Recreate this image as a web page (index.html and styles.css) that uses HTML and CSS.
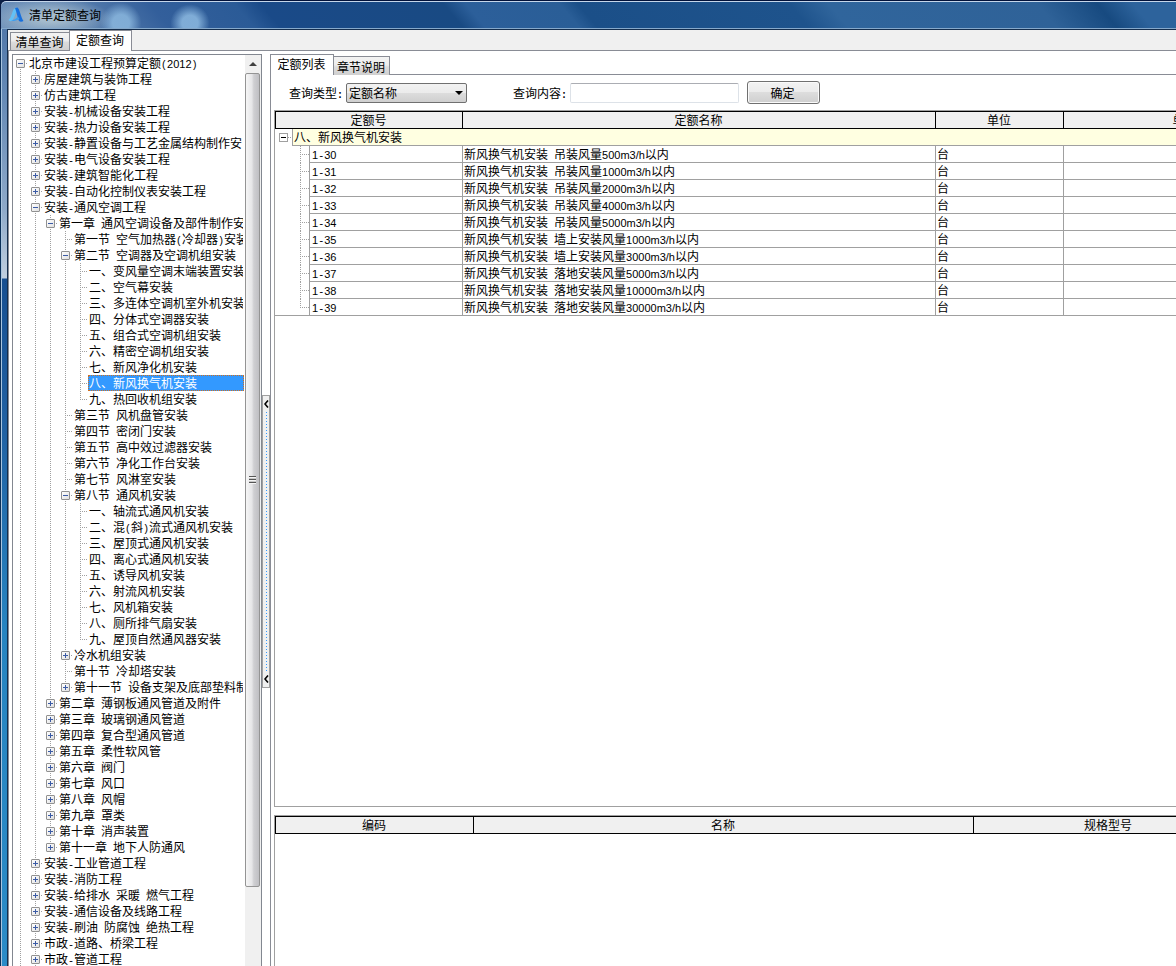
FILE: index.html
```html
<!DOCTYPE html>
<html lang="zh-CN">
<head>
<meta charset="utf-8">
<title>清单定额查询</title>
<link rel="stylesheet" href="styles.css">
</head>
<body>
<div class="window">
<header class="titlebar">
<svg class="logo" viewBox="0 0 16 16" aria-hidden="true">
<path d="M0.500 13C3 11 4 6 5.500 2.500L8 .5l1.500 1.200C8.500 4 7 9 4.500 13.500c-1.500 1-3 .8-4-.5z" fill="#62c0f6"/>
<path d="M7 1L9.500.5c2.500 2 3 9 6 13.500-1.500 1-3.500 1-4.500 0C9.500 11 9 6 7 1z" fill="#176fdc"/>
<path d="M3 13.500c3-.5 5-1.500 7-4l1.500 2.500C9 13.500 6 14.500 3 13.500z" fill="#3c9df0"/>
</svg>
<h1 class="title">清单定额查询</h1>
</header>
<div class="frame">
<main class="client">
<nav class="tabs main-tabs"><button class="tab">清单查询</button><button class="tab active">定额查询</button></nav>
<div class="panes">
<aside class="tree-pane">
<div class="tree-view">
<ul class="tree">
<li class="root"><div class="row"><button class="toggle open" aria-label="折叠"></button><span class="label">北京市建设工程预算定额<span class="n">(</span><span class="d">2012</span><span class="n">)</span></span></div>
<ul>
<li><div class="row"><button class="toggle" aria-label="展开"></button><span class="label">房屋建筑与装饰工程</span></div></li>
<li><div class="row"><button class="toggle" aria-label="展开"></button><span class="label">仿古建筑工程</span></div></li>
<li><div class="row"><button class="toggle" aria-label="展开"></button><span class="label">安装<span class="n">-</span>机械设备安装工程</span></div></li>
<li><div class="row"><button class="toggle" aria-label="展开"></button><span class="label">安装<span class="n">-</span>热力设备安装工程</span></div></li>
<li><div class="row"><button class="toggle" aria-label="展开"></button><span class="label">安装<span class="n">-</span>静置设备与工艺金属结构制作安</span></div></li>
<li><div class="row"><button class="toggle" aria-label="展开"></button><span class="label">安装<span class="n">-</span>电气设备安装工程</span></div></li>
<li><div class="row"><button class="toggle" aria-label="展开"></button><span class="label">安装<span class="n">-</span>建筑智能化工程</span></div></li>
<li><div class="row"><button class="toggle" aria-label="展开"></button><span class="label">安装<span class="n">-</span>自动化控制仪表安装工程</span></div></li>
<li><div class="row"><button class="toggle open" aria-label="折叠"></button><span class="label">安装<span class="n">-</span>通风空调工程</span></div>
<ul>
<li><div class="row"><button class="toggle open" aria-label="折叠"></button><span class="label">第一章<span class="n"> </span>通风空调设备及部件制作安</span></div>
<ul>
<li><div class="row leaf"><span class="label">第一节<span class="n"> </span>空气加热器<span class="n">(</span>冷却器<span class="n">)</span>安装</span></div></li>
<li><div class="row"><button class="toggle open" aria-label="折叠"></button><span class="label">第二节<span class="n"> </span>空调器及空调机组安装</span></div>
<ul>
<li><div class="row leaf"><span class="label">一、变风量空调末端装置安装</span></div></li>
<li><div class="row leaf"><span class="label">二、空气幕安装</span></div></li>
<li><div class="row leaf"><span class="label">三、多连体空调机室外机安装</span></div></li>
<li><div class="row leaf"><span class="label">四、分体式空调器安装</span></div></li>
<li><div class="row leaf"><span class="label">五、组合式空调机组安装</span></div></li>
<li><div class="row leaf"><span class="label">六、精密空调机组安装</span></div></li>
<li><div class="row leaf"><span class="label">七、新风净化机安装</span></div></li>
<li><div class="row leaf"><span class="label selected">八、新风换气机安装</span></div></li>
<li><div class="row leaf"><span class="label">九、热回收机组安装</span></div></li>
</ul></li>
<li><div class="row leaf"><span class="label">第三节<span class="n"> </span>风机盘管安装</span></div></li>
<li><div class="row leaf"><span class="label">第四节<span class="n"> </span>密闭门安装</span></div></li>
<li><div class="row leaf"><span class="label">第五节<span class="n"> </span>高中效过滤器安装</span></div></li>
<li><div class="row leaf"><span class="label">第六节<span class="n"> </span>净化工作台安装</span></div></li>
<li><div class="row leaf"><span class="label">第七节<span class="n"> </span>风淋室安装</span></div></li>
<li><div class="row"><button class="toggle open" aria-label="折叠"></button><span class="label">第八节<span class="n"> </span>通风机安装</span></div>
<ul>
<li><div class="row leaf"><span class="label">一、轴流式通风机安装</span></div></li>
<li><div class="row leaf"><span class="label">二、混<span class="n">(</span>斜<span class="n">)</span>流式通风机安装</span></div></li>
<li><div class="row leaf"><span class="label">三、屋顶式通风机安装</span></div></li>
<li><div class="row leaf"><span class="label">四、离心式通风机安装</span></div></li>
<li><div class="row leaf"><span class="label">五、诱导风机安装</span></div></li>
<li><div class="row leaf"><span class="label">六、射流风机安装</span></div></li>
<li><div class="row leaf"><span class="label">七、风机箱安装</span></div></li>
<li><div class="row leaf"><span class="label">八、厕所排气扇安装</span></div></li>
<li><div class="row leaf"><span class="label">九、屋顶自然通风器安装</span></div></li>
</ul></li>
<li><div class="row"><button class="toggle" aria-label="展开"></button><span class="label">冷水机组安装</span></div></li>
<li><div class="row leaf"><span class="label">第十节<span class="n"> </span>冷却塔安装</span></div></li>
<li><div class="row"><button class="toggle" aria-label="展开"></button><span class="label">第十一节<span class="n"> </span>设备支架及底部垫料制</span></div></li>
</ul></li>
<li><div class="row"><button class="toggle" aria-label="展开"></button><span class="label">第二章<span class="n"> </span>薄钢板通风管道及附件</span></div></li>
<li><div class="row"><button class="toggle" aria-label="展开"></button><span class="label">第三章<span class="n"> </span>玻璃钢通风管道</span></div></li>
<li><div class="row"><button class="toggle" aria-label="展开"></button><span class="label">第四章<span class="n"> </span>复合型通风管道</span></div></li>
<li><div class="row"><button class="toggle" aria-label="展开"></button><span class="label">第五章<span class="n"> </span>柔性软风管</span></div></li>
<li><div class="row"><button class="toggle" aria-label="展开"></button><span class="label">第六章<span class="n"> </span>阀门</span></div></li>
<li><div class="row"><button class="toggle" aria-label="展开"></button><span class="label">第七章<span class="n"> </span>风口</span></div></li>
<li><div class="row"><button class="toggle" aria-label="展开"></button><span class="label">第八章<span class="n"> </span>风帽</span></div></li>
<li><div class="row"><button class="toggle" aria-label="展开"></button><span class="label">第九章<span class="n"> </span>罩类</span></div></li>
<li><div class="row"><button class="toggle" aria-label="展开"></button><span class="label">第十章<span class="n"> </span>消声装置</span></div></li>
<li><div class="row"><button class="toggle" aria-label="展开"></button><span class="label">第十一章<span class="n"> </span>地下人防通风</span></div></li>
</ul></li>
<li><div class="row"><button class="toggle" aria-label="展开"></button><span class="label">安装<span class="n">-</span>工业管道工程</span></div></li>
<li><div class="row"><button class="toggle" aria-label="展开"></button><span class="label">安装<span class="n">-</span>消防工程</span></div></li>
<li><div class="row"><button class="toggle" aria-label="展开"></button><span class="label">安装<span class="n">-</span>给排水<span class="n"> </span>采暖<span class="n"> </span>燃气工程</span></div></li>
<li><div class="row"><button class="toggle" aria-label="展开"></button><span class="label">安装<span class="n">-</span>通信设备及线路工程</span></div></li>
<li><div class="row"><button class="toggle" aria-label="展开"></button><span class="label">安装<span class="n">-</span>刷油<span class="n"> </span>防腐蚀<span class="n"> </span>绝热工程</span></div></li>
<li><div class="row"><button class="toggle" aria-label="展开"></button><span class="label">市政<span class="n">-</span>道路、桥梁工程</span></div></li>
<li class="more"><div class="row"><button class="toggle" aria-label="展开"></button><span class="label">市政<span class="n">-</span>管道工程</span></div></li>
</ul></li>
</ul>
</div>
<div class="scrollbar">
<button class="scroll-up" aria-label="向上滚动"></button>
<div class="thumb"><span class="grip"></span></div>
<div class="track"></div>
</div>
</aside>
<div class="splitter">
<button class="split-handle" aria-label="折叠面板">
<svg width="5" height="8" viewBox="0 0 5 8"><path d="M4 0.500L1 4l3 3.500" fill="none" stroke="#000" stroke-width="1.600"/></svg>
<span class="dots"></span>
<svg width="5" height="8" viewBox="0 0 5 8"><path d="M4 0.500L1 4l3 3.500" fill="none" stroke="#000" stroke-width="1.600"/></svg>
</button>
</div>
<section class="detail">
<nav class="tabs sub-tabs"><button class="tab active">定额列表</button><button class="tab">章节说明</button></nav>
<div class="detail-body">
<form class="query">
<label for="kind">查询类型<span class="n b">:</span></label>
<span class="select-wrap"><select id="kind"><option>定额名称</option></select></span>
<label for="text" class="second">查询内容<span class="n b">:</span></label>
<input id="text" type="text">
<button type="button" class="ok">确定</button>
</form>
<div class="grid upper">
<table>
<colgroup><col class="c1"><col class="c2"><col class="c3"><col class="c4"></colgroup>
<thead><tr><th>定额号</th><th>定额名称</th><th>单位</th><th>单价</th></tr></thead>
<tbody>
<tr class="group"><td colspan="4"><div class="cell"><span class="gutter"><button class="toggle flat" aria-label="折叠"></button></span><span class="val">八、新风换气机安装</span></div></td></tr>
<tr><td><div class="cell"><span class="gutter"></span><span class="val"><span class="d">1</span><span class="n">-</span><span class="d">30</span></span></div></td><td>新风换气机安装<span class="n"> </span>吊装风量<span class="d">500m3/h</span>以内</td><td>台</td><td></td></tr>
<tr><td><div class="cell"><span class="gutter"></span><span class="val"><span class="d">1</span><span class="n">-</span><span class="d">31</span></span></div></td><td>新风换气机安装<span class="n"> </span>吊装风量<span class="d">1000m3/h</span>以内</td><td>台</td><td></td></tr>
<tr><td><div class="cell"><span class="gutter"></span><span class="val"><span class="d">1</span><span class="n">-</span><span class="d">32</span></span></div></td><td>新风换气机安装<span class="n"> </span>吊装风量<span class="d">2000m3/h</span>以内</td><td>台</td><td></td></tr>
<tr><td><div class="cell"><span class="gutter"></span><span class="val"><span class="d">1</span><span class="n">-</span><span class="d">33</span></span></div></td><td>新风换气机安装<span class="n"> </span>吊装风量<span class="d">4000m3/h</span>以内</td><td>台</td><td></td></tr>
<tr><td><div class="cell"><span class="gutter"></span><span class="val"><span class="d">1</span><span class="n">-</span><span class="d">34</span></span></div></td><td>新风换气机安装<span class="n"> </span>吊装风量<span class="d">5000m3/h</span>以内</td><td>台</td><td></td></tr>
<tr><td><div class="cell"><span class="gutter"></span><span class="val"><span class="d">1</span><span class="n">-</span><span class="d">35</span></span></div></td><td>新风换气机安装<span class="n"> </span>墙上安装风量<span class="d">1000m3/h</span>以内</td><td>台</td><td></td></tr>
<tr><td><div class="cell"><span class="gutter"></span><span class="val"><span class="d">1</span><span class="n">-</span><span class="d">36</span></span></div></td><td>新风换气机安装<span class="n"> </span>墙上安装风量<span class="d">3000m3/h</span>以内</td><td>台</td><td></td></tr>
<tr><td><div class="cell"><span class="gutter"></span><span class="val"><span class="d">1</span><span class="n">-</span><span class="d">37</span></span></div></td><td>新风换气机安装<span class="n"> </span>落地安装风量<span class="d">5000m3/h</span>以内</td><td>台</td><td></td></tr>
<tr><td><div class="cell"><span class="gutter"></span><span class="val"><span class="d">1</span><span class="n">-</span><span class="d">38</span></span></div></td><td>新风换气机安装<span class="n"> </span>落地安装风量<span class="d">10000m3/h</span>以内</td><td>台</td><td></td></tr>
<tr class="last"><td><div class="cell"><span class="gutter"></span><span class="val"><span class="d">1</span><span class="n">-</span><span class="d">39</span></span></div></td><td>新风换气机安装<span class="n"> </span>落地安装风量<span class="d">30000m3/h</span>以内</td><td>台</td><td></td></tr>
</tbody>
</table>
</div>
<div class="grid lower">
<table>
<colgroup><col class="d1"><col class="d2"><col class="d3"></colgroup>
<thead><tr><th>编码</th><th>名称</th><th>规格型号</th></tr></thead>
</table>
</div>
</div>
</section>
</div>
</main>
</div>
</div>
</body>
</html>
```
FILE: styles.css
```css
* { box-sizing: border-box; }
body {
  margin: 0;
  overflow: hidden;
  font: 12px/16px "Noto Sans CJK SC", sans-serif;
  color: #000;
  background: #fff;
}
button, input, select { font: inherit; color: inherit; margin: 0; padding: 0; border-radius: 0; }
ul { list-style: none; margin: 0; padding: 0; }

/* half-width punctuation: exactly half of the 12px ideograph */
.n { font-family: "Liberation Mono", monospace; font-size: 10px; line-height: 0; white-space: pre; }
/* digits and units, about half an ideograph each */
.d { font-family: "Liberation Sans", sans-serif; font-size: 11px; line-height: 0; }
.b { font-weight: bold; }

.window { height: 100vh; display: flex; flex-direction: column; background: #0b1f45; }
.titlebar {
  flex: none;
  height: 29px;
  display: flex;
  align-items: center;
  gap: 5px;
  padding: 0 7px;
  border-top: 1px solid #02123a;
  border-left: 1px solid #0b1f45;
  border-top-left-radius: 6px;
  box-shadow: inset 0 1px #c5d6ea, inset 0 -1px #86a9cb;
  background:
    radial-gradient(ellipse 60px 20px at 50px 17px, #b4c8d2cc 20%, #9db8d500),
    radial-gradient(ellipse 24px 24px at 120px 22px, #8fbce2cc 35%, #7fb0dc00 85%),
    radial-gradient(ellipse 23px 22px at 189px 22px, #93c0e6cc 35%, #7fb0dc00 85%),
    linear-gradient(50deg, #6f92bb 0, #6085b2 60px, #335f9b 130px, #2b5b97 195px, #1a4a88 215px, #194a83 355px, #2c5f9a 372px, #2a5e97 444px, #1b4f88 458px, #1e538c 620px, #30659c 650px, #2f6298 810px, #174a80 856px, #2d639c 883px);
}
.logo { width: 16px; height: 16px; }
.title { margin: 0; font-size: 12px; font-weight: normal; }

.frame {
  flex: 1;
  min-height: 0;
  display: flex;
  padding-left: 7px;
  box-shadow: inset 1px 0 #0b2f58, inset 2px 0 #a9c4de;
  background: linear-gradient(#5279aa 0, #6388b5 60px, #8ea9c9 180px, #c1cfdf 249px, #174f91 250px, #2161a3 400px, #2784c1 600px, #2b8bc7 100%);
}
.client {
  flex: 1;
  min-width: 0;
  display: flex;
  flex-direction: column;
  border-left: 1px solid #152e4d;
  border-top: 1px solid #152e4d;
  background: #f0f0f0;
}

.tabs { flex: none; display: flex; align-items: flex-end; }
.tab {
  height: 19px;
  padding-right: 1px;
  border: 1px solid #898c95;
  border-bottom: 0;
  line-height: 17px;
  background: linear-gradient(#f3f3f3, #ececec 45%, #dcdcdc 55%, #d0d0d0);
}
.tab.active { background: #fff; }
.main-tabs { height: 21px; padding-left: 2px; box-shadow: inset 0 -1px #898c95; }
.main-tabs .tab { width: 59px; border-bottom: 1px solid #898c95; border-right: 0; }
.main-tabs .tab.active { width: 63px; height: 21px; border-right: 1px solid #898c95; border-bottom: 0; line-height: 18px; padding-bottom: 2px; }

.panes {
  flex: 1;
  min-height: 0;
  display: flex;
  border-left: 1px solid #898c95;
  padding: 3px 0 0 3px;
  background: #fff;
}

.tree-pane { flex: none; width: 250px; display: flex; border: 1px solid #828790; border-bottom: 0; }
.tree-view { flex: 1; min-width: 0; overflow: hidden; padding-left: 3px; }
.tree li {
  background: repeating-linear-gradient(#a0a0a0 0 1px, transparent 1px 2px) 4px 0 / 1px 100% no-repeat;
}
.tree .root { background-position: 4px 8px; }
.tree ul { margin-left: 15px; }
.tree ul li:last-child:not(.more) { background-size: 1px 8px; }
.row {
  height: 16px;
  display: flex;
  align-items: center;
  margin-right: 1px;
  background: repeating-linear-gradient(90deg, #a0a0a0 0 1px, transparent 1px 2px) 4px 8px / 8px 1px no-repeat;
}
.row.leaf { padding-left: 9px; }
.label { flex: 1; min-width: 0; height: 16px; overflow: hidden; white-space: nowrap; margin-left: 3px; padding-left: 1px; margin-right: 1px; line-height: 16px; }
.label.selected { margin-right: 0; color: #fff; background: #3399ff; outline: 1px dotted #d07020; outline-offset: -1px; }

.toggle {
  flex: none;
  width: 9px;
  height: 9px;
  border: 1px solid #919191;
  border-radius: 1px;
  background:
    linear-gradient(#3b5ba5, #3b5ba5) center / 5px 1px no-repeat,
    linear-gradient(#3b5ba5, #3b5ba5) center / 1px 5px no-repeat,
    linear-gradient(135deg, #fff, #e0e0e0);
}
.toggle.open { background: linear-gradient(#3b5ba5, #3b5ba5) center / 5px 1px no-repeat, linear-gradient(135deg, #fff, #e0e0e0); }
.toggle.flat { border-color: #a0a0a0; border-radius: 0; background: linear-gradient(#000, #000) center / 5px 1px no-repeat #fff; }

.scrollbar { flex: none; width: 16px; display: flex; flex-direction: column; background: #f0f0f0; }
.scroll-up { flex: none; height: 18px; border: 0; background: #f0f0f0; display: flex; align-items: center; justify-content: center; }
.scroll-up::before { content: ""; border: 4px solid transparent; border-top: 0; border-bottom-color: #404040; }
.thumb {
  flex: 814;
  display: flex;
  align-items: center;
  justify-content: center;
  margin-right: 1px;
  border: 1px solid #949494;
  border-radius: 2px;
  background: linear-gradient(90deg, #f6f6f6, #e6e6e8 45%, #cfcfd2 60%, #bfbfc3);
}
.track { flex: 79; }
.grip { width: 7px; height: 8px; background: repeating-linear-gradient(#555 0 1px, #f5f5f5 1px 2px, #c8c8c8 2px 3px); }

.splitter { flex: none; width: 8px; display: flex; flex-direction: column; }
.splitter::before { content: ""; flex: 341; }
.splitter::after { content: ""; flex: 278; }
.split-handle {
  flex: 283;
  display: flex;
  flex-direction: column;
  align-items: center;
  justify-content: space-between;
  gap: 4px;
  padding: 4px 0;
  border: 1px solid #a0a0a0;
  background: #f0f0f0;
}
.dots { flex: 1; width: 1px; background: repeating-linear-gradient(#3399ff 0 1px, transparent 1px 3px); }

.detail { flex: 1; min-width: 0; display: flex; flex-direction: column; }
.sub-tabs { height: 21px; box-shadow: inset 0 -1px #898c95; }
.sub-tabs .tab { width: 56px; border-left: 0; }
.sub-tabs .tab.active { width: 64px; height: 21px; border-left: 1px solid #898c95; line-height: 18px; padding-bottom: 2px; }
.detail-body { flex: 1; min-height: 0; display: flex; flex-direction: column; border-left: 1px solid #898c95; padding-left: 3px; }

.query { flex: none; height: 35px; display: flex; align-items: center; padding-left: 15px; }
.query label { flex: none; width: 57px; }
.query .second { margin-left: 46px; }
.select-wrap { position: relative; width: 121px; height: 20px; }
.select-wrap::after {
  content: "";
  position: absolute;
  right: 4px;
  top: 8px;
  border: 4px solid transparent;
  border-top-color: #000;
  border-bottom: 0;
  pointer-events: none;
}
select {
  appearance: none;
  display: block;
  width: 100%;
  height: 100%;
  padding-left: 2px;
  border: 1px solid #707070;
  border-radius: 2px;
  background: linear-gradient(#f2f2f2, #ebebeb 49%, #dddddd 50%, #cfcfcf);
}
input { width: 169px; height: 20px; border: 1px solid #dde2e8; border-top-color: #abadb3; border-radius: 2px; background: #fff; }
.ok {
  width: 73px;
  height: 23px;
  margin-left: 8px;
  padding-right: 2px;
  border: 1px solid #707070;
  border-radius: 3px;
  box-shadow: inset 0 0 0 1px #fafafa;
  background: linear-gradient(#f2f2f2, #ebebeb 49%, #dddddd 50%, #cfcfcf);
}

.grid { overflow: hidden; border-left: 1px solid #a0a0a0; border-top: 1px solid #a0a0a0; }
.upper { flex: 697; border-bottom: 1px solid #a0a0a0; }
.lower { flex: 151; margin-top: 8px; }
table { table-layout: fixed; border-collapse: separate; border-spacing: 0; }
.upper table { width: 1032px; }
.lower table { width: 969px; }
.c1 { width: 188px; }
.c2 { width: 473px; }
.c3 { width: 128px; }
.c4 { width: 243px; }
.d1 { width: 199px; }
.d2 { width: 500px; }
.d3 { width: 270px; }
th {
  height: 18px;
  padding: 0 1px 0 0;
  font-weight: normal;
  line-height: 16px;
  border: 1px solid #000;
  border-left: 0;
  background: #f0f0f0;
}
th:first-child { border-left: 1px solid #000; }
td {
  height: 17px;
  padding: 0 0 0 1px;
  line-height: 16px;
  white-space: nowrap;
  overflow: hidden;
  vertical-align: top;
  border-right: 1px solid #a0a0a0;
  border-bottom: 1px solid #a0a0a0;
}
td:first-child { padding: 0; border-bottom: 0; }
.cell { display: flex; height: 17px; }
.gutter {
  flex: none;
  width: 34px;
  background:
    repeating-linear-gradient(#a0a0a0 0 1px, transparent 1px 2px) 25px 0 / 1px 100% no-repeat,
    repeating-linear-gradient(90deg, #a0a0a0 0 1px, transparent 1px 2px) 25px 8px / 9px 1px no-repeat;
}
.last .gutter {
  border-bottom: 1px solid #a0a0a0;
  background-size: 1px 8px, 9px 1px;
}
.val { flex: 1; height: 17px; padding-left: 2px; border-left: 1px solid #a0a0a0; border-bottom: 1px solid #a0a0a0; }
.group .gutter {
  width: 17px;
  padding: 4px 0 0 4px;
  line-height: 0;
  background: repeating-linear-gradient(90deg, #a0a0a0 0 1px, transparent 1px 2px) 13px 8px / 4px 1px no-repeat;
}
.group .val { background: #ffffe1; padding-left: 1px; }
```
